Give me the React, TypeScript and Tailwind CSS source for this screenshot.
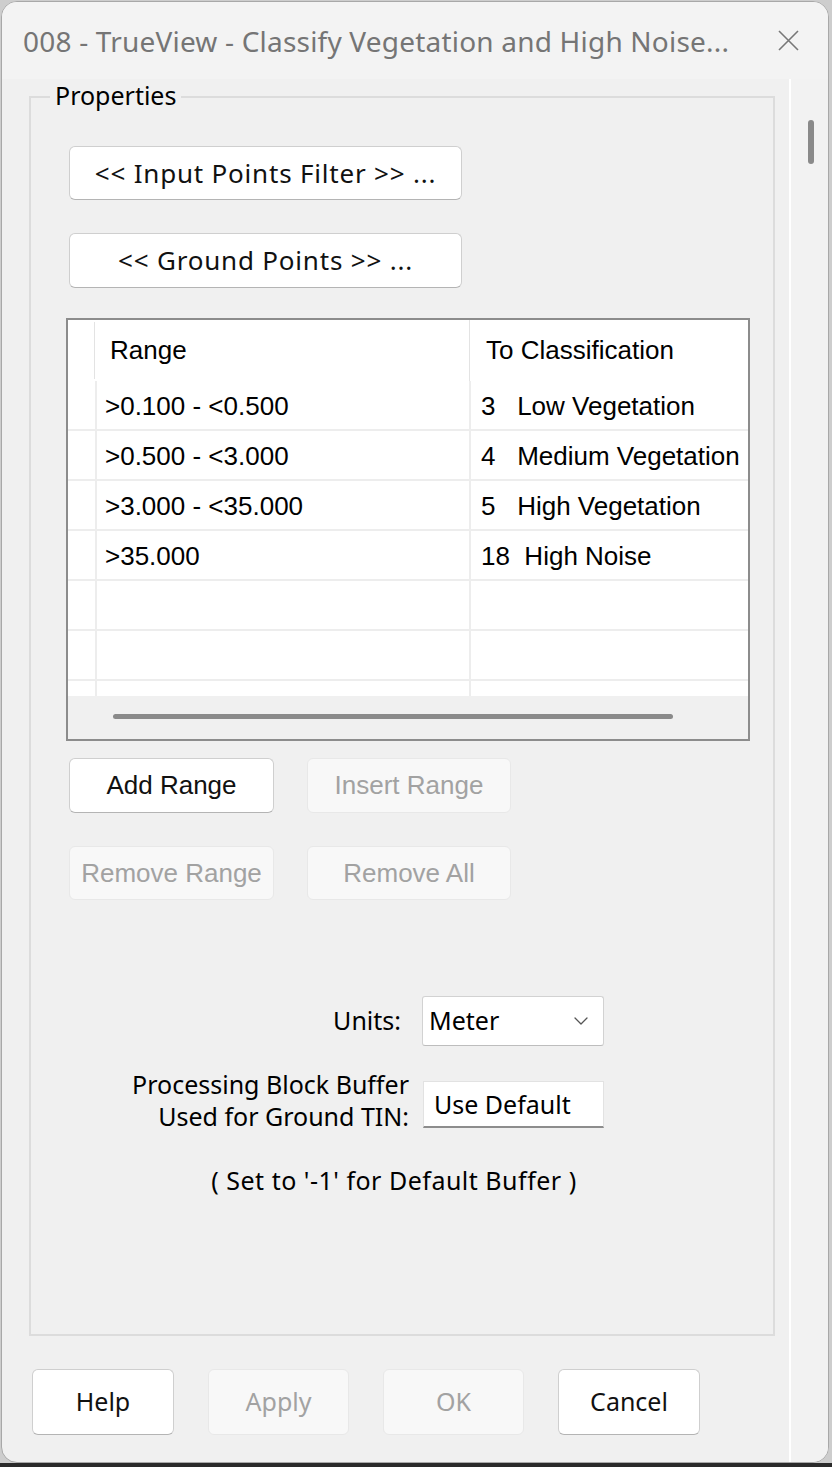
import { ChevronDown } from 'lucide-react';

const ui = "font-['Noto_Sans','Open_Sans',sans-serif]";
const arial = "font-['Liberation_Sans',Arial,sans-serif]";

const ranges: [string, string][] = [
  ['>0.100 - <0.500', '3   Low Vegetation'],
  ['>0.500 - <3.000', '4   Medium Vegetation'],
  ['>3.000 - <35.000', '5   High Vegetation'],
  ['>35.000', '18  High Noise'],
  ['', ''],
  ['', ''],
  ['', ''],
];

function PushButton({
  label,
  disabled,
  className,
}: {
  label: string;
  disabled?: boolean;
  className: string;
}) {
  return (
    <button
      type="button"
      disabled={disabled}
      className={
        disabled
          ? `flex items-center justify-center rounded-[6px] border border-[#e8e8e8] bg-[#f8f8f8] text-[#a2a2a2] ${className}`
          : `flex items-center justify-center rounded-[6px] border border-[#cfcfcf] border-b-[#b4b4b4] bg-white text-[#111] ${className}`
      }
    >
      {label}
    </button>
  );
}

function RangeTable() {
  return (
    <div className="ml-[35px] mt-[30px] flex h-[423px] w-[684px] flex-col overflow-hidden border-2 border-[#8c8c8c] bg-white">
      {/* column headers */}
      <div className={`flex h-[61px] shrink-0 text-[26px] text-black ${arial}`}>
        <div className="my-[2px] w-[27px] border-r border-[#e3e3e3]" />
        <div className="flex w-[375px] items-center border-r border-[#e3e3e3] pl-[15px]">Range</div>
        <div className="flex flex-1 items-center pl-[16px]">To Classification</div>
      </div>
      {/* grid rows, last one cut off by the scroll bar */}
      <div className={`h-[315px] shrink-0 overflow-hidden text-[26px] text-black ${arial}`}>
        {ranges.map(([range, cls], i) => (
          <div key={i} className="flex h-[50px] border-b-2 border-[#ededed]">
            <div className="w-[29px] shrink-0 border-r-2 border-[#ededed]" />
            <div className="flex w-[374px] shrink-0 items-center border-r-2 border-[#ededed] pl-[8px] pt-[2px]">
              {range}
            </div>
            <div className="flex flex-1 items-center whitespace-pre pl-[10px] pt-[2px]">{cls}</div>
          </div>
        ))}
      </div>
      {/* horizontal scroll bar */}
      <div className="flex-1 bg-[#f0f0f0] pt-[18px]">
        <div className="ml-[45px] h-[5px] w-[560px] rounded-full bg-[#8a8a8a]" />
      </div>
    </div>
  );
}

export default function App() {
  return (
    <div className="flex h-[1467px] w-[832px] flex-col bg-[#cdcdcd]">
      <div className="ml-[1px] mt-[1px] flex h-[1462px] w-[828px] flex-col overflow-hidden rounded-[16px] border border-[#a8a8a8] bg-[#f0f0f0]">
        {/* title bar */}
        <div className={`flex h-[77px] shrink-0 items-center justify-between bg-[#f3f3f3] pl-[21px] pr-[29px] ${ui}`}>
          <span className="text-[28px] tracking-[0.2px] text-[#757575]">
            008 - TrueView - Classify Vegetation and High Noise...
          </span>
          <svg width="21" height="21" viewBox="0 0 21 21" className="text-[#777]">
            <path d="M1 1L20 20M20 1L1 20" stroke="currentColor" strokeWidth="1.6" />
          </svg>
        </div>

        <div className="flex flex-1">
          {/* client area */}
          <div className="flex w-[787px] shrink-0 flex-col">
            <div className="relative ml-[27px] mt-[17px] flex h-[1240px] w-[746px] flex-col items-start border-2 border-[#dcdcdc]">
              <span className={`absolute left-[19px] top-[-19px] bg-[#f0f0f0] px-[5px] text-[25px] leading-[32px] text-black ${ui}`}>
                Properties
              </span>

              <PushButton
                label="<< Input Points Filter >> ..."
                className={`ml-[38px] mt-[48px] h-[54px] w-[393px] text-[26px] tracking-[0.8px] ${ui}`}
              />
              <PushButton
                label="<< Ground Points >> ..."
                className={`ml-[38px] mt-[33px] h-[55px] w-[393px] text-[26px] tracking-[0.8px] ${ui}`}
              />

              <RangeTable />

              <div className="ml-[38px] mt-[17px] flex gap-[33px]">
                <PushButton label="Add Range" className={`h-[55px] w-[205px] text-[26px] ${arial}`} />
                <PushButton label="Insert Range" disabled className={`h-[55px] w-[204px] text-[26px] ${arial}`} />
              </div>
              <div className="ml-[38px] mt-[33px] flex gap-[33px]">
                <PushButton label="Remove Range" disabled className={`h-[54px] w-[205px] text-[26px] ${arial}`} />
                <PushButton label="Remove All" disabled className={`h-[54px] w-[204px] text-[26px] ${arial}`} />
              </div>

              {/* units / buffer fields */}
              <div className={`ml-[70px] mt-[96px] flex items-center text-[25px] text-black ${ui}`}>
                <div className="w-[308px] pr-[8px] text-right">Units:</div>
                <div className="ml-[13px] flex h-[50px] w-[182px] items-center justify-between rounded-[3px] border border-[#d2d2d2] border-b-[#bdbdbd] bg-white pl-[6px] pr-[10px]">
                  <span>Meter</span>
                  <ChevronDown size={24} strokeWidth={1.3} className="text-[#555]" />
                </div>
              </div>
              <div className={`ml-[70px] mt-[22px] flex items-start text-[25px] leading-[32px] text-black ${ui}`}>
                <div className="w-[308px] text-right">
                  Processing Block Buffer
                  <br />
                  Used for Ground TIN:
                </div>
                <div className="ml-[14px] mt-[13px] flex h-[47px] w-[181px] items-center border border-[#e2e2e2] border-b-2 border-b-[#8d8d8d] bg-white pl-[10px]">
                  Use Default
                </div>
              </div>
              <div className={`mt-[32px] w-[726px] text-center text-[25px] leading-[32px] tracking-[0.5px] text-black ${ui}`}>
                ( Set to '-1' for Default Buffer )
              </div>
            </div>

            {/* dialog buttons */}
            <div className={`ml-[30px] mt-[33px] flex gap-[34px] text-[25px] ${ui}`}>
              <PushButton label="Help" className="h-[66px] w-[142px]" />
              <PushButton label="Apply" disabled className="h-[66px] w-[141px]" />
              <PushButton label="OK" disabled className="h-[66px] w-[141px]" />
              <PushButton label="Cancel" className="h-[66px] w-[142px]" />
            </div>
          </div>

          {/* vertical scroll bar */}
          <div className="w-[2px] bg-white" />
          <div className="flex-1 bg-[#f2f2f2] pt-[41px]">
            <div className="ml-[17px] h-[44px] w-[6px] rounded-full bg-[#8a8a8a]" />
          </div>
        </div>
      </div>
      <div className="flex-1 bg-[#2a2a2a]" />
    </div>
  );
}
